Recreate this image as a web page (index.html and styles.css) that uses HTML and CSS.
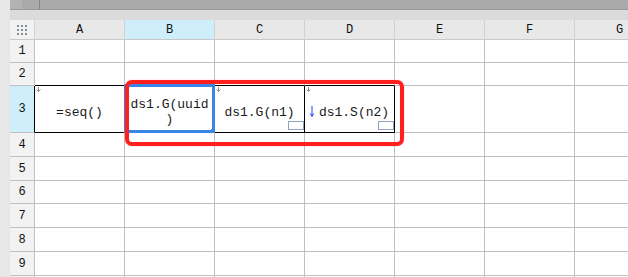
FILE: index.html
```html
<!DOCTYPE html>
<html lang="zh">
<head>
    <meta charset="UTF-8">
    <title>报表设计</title>
    <link rel="stylesheet" href="styles.css">
</head>
<body>
    <div class="app">
        <div class="side"></div>
        <div class="main">
            <div class="toolbar">
                <span class="tb-first"></span>
                <span class="tb-second"></span>
                <span class="tb-rest"></span>
            </div>
            <div class="band"></div>
            <div class="sheet">
                <!-- 列标题 -->
                <div class="corner">
                    <span class="dots">
                        <i></i><i></i><i></i><i></i><i></i><i></i><i></i><i></i><i></i>
                    </span>
                </div>
                <div class="col-head">A</div>
                <div class="col-head active">B</div>
                <div class="col-head">C</div>
                <div class="col-head">D</div>
                <div class="col-head">E</div>
                <div class="col-head">F</div>
                <div class="col-head">G</div>

                <!-- 1 -->
                <div class="row-head">1</div>
                <div class="cell"></div><div class="cell"></div><div class="cell"></div><div class="cell"></div>
                <div class="cell"></div><div class="cell"></div><div class="cell"></div>

                <!-- 2 -->
                <div class="row-head">2</div>
                <div class="cell above"></div><div class="cell above"></div><div class="cell above"></div><div class="cell above"></div>
                <div class="cell"></div><div class="cell"></div><div class="cell"></div>

                <!-- 3 -->
                <div class="row-head active boxed-left">3</div>
                <div class="cell boxed">
                    <span class="flag"><svg width="5" height="5" viewBox="0 0 5 5"><path d="M2.5 0V4M0.5 2.5L2.5 4.5L4.5 2.5" stroke="#8a8a8a" fill="none"/></svg></span>
                    <span class="expr">=seq()</span>
                </div>
                <div class="cell boxed">
                    <span class="expr lines">ds1.G(uuid<br>)</span>
                    <span class="selection"><span class="handle"></span></span>
                </div>
                <div class="cell boxed">
                    <span class="flag"><svg width="5" height="5" viewBox="0 0 5 5"><path d="M2.5 0V4M0.5 2.5L2.5 4.5L4.5 2.5" stroke="#8a8a8a" fill="none"/></svg></span>
                    <span class="expr">ds1.G(n1)</span>
                    <span class="mini"></span>
                </div>
                <div class="cell boxed">
                    <span class="flag"><svg width="5" height="5" viewBox="0 0 5 5"><path d="M2.5 0V4M0.5 2.5L2.5 4.5L4.5 2.5" stroke="#8a8a8a" fill="none"/></svg></span>
                    <span class="expr"><svg class="down" width="4" height="11" viewBox="0 0 4 11"><path d="M2 0V10M0.3 7.5L2 10.5L3.7 7.5" stroke="#1e3cff" fill="none"/></svg>ds1.S(n2)</span>
                    <span class="mini"></span>
                </div>
                <div class="cell"></div><div class="cell"></div><div class="cell"></div>

                <!-- 4 - 9 -->
                <div class="row-head">4</div>
                <div class="cell"></div><div class="cell"></div><div class="cell"></div><div class="cell"></div>
                <div class="cell"></div><div class="cell"></div><div class="cell"></div>
                <div class="row-head">5</div>
                <div class="cell"></div><div class="cell"></div><div class="cell"></div><div class="cell"></div>
                <div class="cell"></div><div class="cell"></div><div class="cell"></div>
                <div class="row-head">6</div>
                <div class="cell"></div><div class="cell"></div><div class="cell"></div><div class="cell"></div>
                <div class="cell"></div><div class="cell"></div><div class="cell"></div>
                <div class="row-head">7</div>
                <div class="cell"></div><div class="cell"></div><div class="cell"></div><div class="cell"></div>
                <div class="cell"></div><div class="cell"></div><div class="cell"></div>
                <div class="row-head">8</div>
                <div class="cell"></div><div class="cell"></div><div class="cell"></div><div class="cell"></div>
                <div class="cell"></div><div class="cell"></div><div class="cell"></div>
                <div class="row-head">9</div>
                <div class="cell"></div><div class="cell"></div><div class="cell"></div><div class="cell"></div>
                <div class="cell"></div><div class="cell"></div><div class="cell"></div>
                <!-- 下一行只露出上边 -->
                <div class="row-head"></div>
                <div class="cell"></div><div class="cell"></div><div class="cell"></div><div class="cell"></div>
                <div class="cell"></div><div class="cell"></div><div class="cell"></div>

                <!-- 标注框 -->
                <div class="highlight"></div>
            </div>
        </div>
    </div>
</body>
</html>
```

FILE: styles.css
```css
body {
    margin: 0;
    padding: 0;
    background-color: #ffffff;
    font-family: 'Liberation Mono', monospace;
    color: #1a1a1a;
    overflow: hidden;
}

.app {
    display: flex;
    height: 277px;
}

.side {
    width: 10px;
    flex-shrink: 0;
    background-color: #e7e7e7;
}

.main {
    flex-grow: 1;
    overflow: hidden;
}

.toolbar {
    display: flex;
    height: 9px;
    border-bottom: 1px solid #999999;
    background-color: #aaaaaa;
}

.tb-first {
    width: 12px;
    background-color: #b3b3b3;
}

.tb-second {
    width: 17px;
    border-right: 1px solid #858585;
}

.tb-rest {
    flex-grow: 1;
}

.band {
    height: 10px;
    background-color: #dbdbdb;
}

.sheet {
    position: relative;
    display: grid;
    grid-template-columns: 25px repeat(7, 90px);
    grid-template-rows: 20px 23px 23px 47px 24px 24px 23px 24px 24px 24px 24px;
}

.sheet > div {
    box-sizing: border-box;
}

.corner {
    display: flex;
    align-items: center;
    justify-content: center;
    background-color: #f1f2f4;
    border-right: 1px solid #d4d4d4;
    border-bottom: 1px solid #c8c8c8;
}

.dots {
    display: grid;
    grid-template-columns: repeat(3, 2px);
    gap: 2px;
    margin-top: 1px;
}

.dots i {
    width: 2px;
    height: 2px;
    background-color: #8c8c8c;
}

.col-head {
    display: flex;
    align-items: center;
    justify-content: center;
    font-size: 12px;
    color: #111111;
    background-color: #e8e8e8;
    border-right: 1px solid #d2d2d2;
    border-bottom: 1px solid #c8c8c8;
    padding-top: 1px;
}

.row-head {
    display: flex;
    align-items: center;
    justify-content: center;
    font-size: 12px;
    color: #111111;
    background-color: #f2f2f2;
    border-right: 1px solid #c0c0c0;
    border-bottom: 1px solid #c0c0c0;
}

.col-head.active, .row-head.active {
    background-color: #cdeefa;
}

.cell {
    position: relative;
    border-right: 1px solid #c0c0c0;
    border-bottom: 1px solid #c0c0c0;
    background-color: #ffffff;
}

.cell.above {
    border-bottom-color: #000000;
}

.row-head.boxed-left {
    border-right-color: #000000;
}

.cell.boxed {
    display: flex;
    align-items: center;
    justify-content: center;
    padding: 6px 1px 0;
    border-right-color: #000000;
    border-bottom-color: #000000;
    font-size: 13px;
    line-height: 15px;
    text-align: center;
}

.expr {
    display: flex;
    align-items: center;
    justify-content: center;
    white-space: nowrap;
}

.expr.lines {
    display: block;
}

.down {
    margin-right: 5px;
    margin-top: -2px;
}

.flag {
    position: absolute;
    top: 1px;
    left: 1px;
    display: flex;
}

.mini {
    position: absolute;
    right: 0;
    bottom: 2px;
    width: 16px;
    height: 9px;
    box-sizing: border-box;
    border: 1px solid #90a4c2;
    background-color: #ffffff;
}

.selection {
    position: absolute;
    top: -2px;
    left: -1px;
    right: -1px;
    bottom: -1px;
    border: 3px solid #3a86e8;
}

.handle {
    position: absolute;
    right: -5px;
    bottom: -5px;
    width: 6px;
    height: 6px;
    background-color: #3a86e8;
}

.highlight {
    position: absolute;
    left: 115px;
    top: 60px;
    width: 279px;
    height: 66px;
    box-sizing: border-box;
    border: 4px solid #ff1f1f;
    border-radius: 7px;
    box-shadow: 0 0 1px rgba(255, 40, 40, 0.7);
    pointer-events: none;
}
```
